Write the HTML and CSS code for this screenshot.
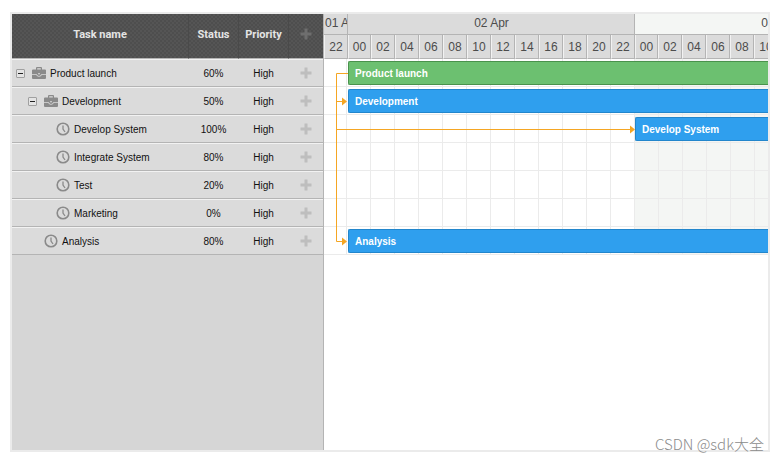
FILE: index.html
```html
<!DOCTYPE html>
<html lang="en">
<head>
    <meta charset="UTF-8">
    <meta name="viewport" content="width=device-width, initial-scale=1.0">
    <title>Gantt</title>
    <link rel="stylesheet" href="styles.css">
</head>
<body>
    <svg width="0" height="0" class="sprite">
        <symbol id="plus" viewBox="0 0 12 12">
            <path d="M4.5 0.5h3v4h4v3h-4v4h-3v-4h-4v-3h4z"/>
        </symbol>
        <symbol id="case" viewBox="0 0 14 12">
            <path fill-rule="evenodd" d="M4 2.5V1q0-1 1-1h4q1 0 1 1v1.5h3q1 0 1 1V7.200H9.200q-.5 1.800-2.200 1.800T4.800 7.200H0V3.500q0-1 1-1zM5.200 2.500h3.600V1.200H5.200zM0 8h4.200q.8 1.800 2.800 1.800T9.800 8H14v3q0 1-1 1H1q-1 0-1-1zM6 6.200h2v1H6z"/>
        </symbol>
        <symbol id="clock" viewBox="0 0 14 14">
            <circle cx="7" cy="7" r="5.800" fill="none" stroke="currentColor" stroke-width="1.600"/>
            <path d="M7 3.500V7l2 3" fill="none" stroke="currentColor" stroke-width="1.300"/>
        </symbol>
    </svg>

    <div class="gantt">
        <div class="grid">
            <table>
                <thead>
                    <tr>
                        <th>Task name</th>
                        <th class="col-status">Status</th>
                        <th class="col-priority">Priority</th>
                        <th class="col-add"><button type="button" class="add" aria-label="Add task"><svg><use href="#plus"/></svg></button></th>
                    </tr>
                </thead>
                <tbody>
                    <tr>
                        <td><div class="name"><button type="button" class="toggle" aria-label="Collapse"></button><svg class="icon case"><use href="#case"/></svg>Product launch</div></td>
                        <td>60%</td>
                        <td>High</td>
                        <td><button type="button" class="add" aria-label="Add task"><svg><use href="#plus"/></svg></button></td>
                    </tr>
                    <tr>
                        <td><div class="name level-1"><button type="button" class="toggle" aria-label="Collapse"></button><svg class="icon case"><use href="#case"/></svg>Development</div></td>
                        <td>50%</td>
                        <td>High</td>
                        <td><button type="button" class="add" aria-label="Add task"><svg><use href="#plus"/></svg></button></td>
                    </tr>
                    <tr>
                        <td><div class="name level-2 leaf"><svg class="icon"><use href="#clock"/></svg>Develop System</div></td>
                        <td>100%</td>
                        <td>High</td>
                        <td><button type="button" class="add" aria-label="Add task"><svg><use href="#plus"/></svg></button></td>
                    </tr>
                    <tr>
                        <td><div class="name level-2 leaf"><svg class="icon"><use href="#clock"/></svg>Integrate System</div></td>
                        <td>80%</td>
                        <td>High</td>
                        <td><button type="button" class="add" aria-label="Add task"><svg><use href="#plus"/></svg></button></td>
                    </tr>
                    <tr>
                        <td><div class="name level-2 leaf"><svg class="icon"><use href="#clock"/></svg>Test</div></td>
                        <td>20%</td>
                        <td>High</td>
                        <td><button type="button" class="add" aria-label="Add task"><svg><use href="#plus"/></svg></button></td>
                    </tr>
                    <tr>
                        <td><div class="name level-2 leaf"><svg class="icon"><use href="#clock"/></svg>Marketing</div></td>
                        <td>0%</td>
                        <td>High</td>
                        <td><button type="button" class="add" aria-label="Add task"><svg><use href="#plus"/></svg></button></td>
                    </tr>
                    <tr>
                        <td><div class="name level-1 leaf"><svg class="icon"><use href="#clock"/></svg>Analysis</div></td>
                        <td>80%</td>
                        <td>High</td>
                        <td><button type="button" class="add" aria-label="Add task"><svg><use href="#plus"/></svg></button></td>
                    </tr>
                </tbody>
            </table>
        </div>

        <div class="chart">
            <div class="scale">
                <div class="day partial">
                    <div class="date">01 A</div>
                    <div class="hours"><span>22</span></div>
                </div>
                <div class="day">
                    <div class="date">02 Apr</div>
                    <div class="hours"><span>00</span><span>02</span><span>04</span><span>06</span><span>08</span><span>10</span><span>12</span><span>14</span><span>16</span><span>18</span><span>20</span><span>22</span></div>
                </div>
                <div class="day weekend">
                    <div class="date">03 Apr</div>
                    <div class="hours"><span>00</span><span>02</span><span>04</span><span>06</span><span>08</span><span>10</span><span>12</span><span>14</span><span>16</span><span>18</span><span>20</span><span>22</span></div>
                </div>
            </div>
            <div class="rows">
                <div class="row"><div class="bar project">Product launch</div></div>
                <div class="row"><div class="bar">Development</div></div>
                <div class="row"><div class="bar next-day">Develop System</div></div>
                <div class="row"></div>
                <div class="row"></div>
                <div class="row"></div>
                <div class="row"><div class="bar">Analysis</div></div>
                <!-- dependency links -->
                <svg class="links" width="312" height="196">
                    <path class="line" d="M24 14.500H12.500V182.500H19M12.500 42.500H19M12.500 70.500H307"/>
                    <path class="arrow" d="M18 38.500l5 4-5 4zM18 178.500l5 4-5 4zM306 66.500l5 4-5 4z"/>
                </svg>
            </div>
        </div>
    </div>
    <div class="watermark">CSDN @sdk大全</div>
</body>
</html>
```

FILE: styles.css
```css
* {
    box-sizing: border-box;
}

body {
    position: relative;
    display: flex;
    min-height: 100vh;
    margin: 0;
    padding: 12px 9px 8px 10px;
    background: #fff;
    color: #111;
    font-family: "Liberation Sans", Arial, sans-serif;
    font-size: 10px;
}

.sprite {
    position: absolute;
}

.gantt {
    display: flex;
    flex: 1;
    min-width: 0;
    border: 2px solid #ebebeb;
}

/* task list */
.grid {
    flex: none;
    width: 312px;
    background: #d6d6d6;
    border-right: 1px solid #b4b4b4;
}

table {
    width: 100%;
    table-layout: fixed;
    border-collapse: separate;
    border-spacing: 0;
}

th {
    height: 45px;
    padding: 0 0 4px;
    background: repeating-conic-gradient(#4e4e4e 0 25%, #555 0 50%) 0 0 / 4px 4px;
    border-bottom: 1px solid #b4b4b4;
    border-right: 1px solid #4a4a4a;
    color: #e4e4e4;
    font-size: 11px;
    font-family: Roboto, "Liberation Sans", sans-serif;
}

th:last-child {
    border-right: 0;
}

.col-status,
.col-priority {
    width: 50px;
}

.col-add {
    width: 34px;
}

td {
    height: 28px;
    padding: 0 1px 0 0;
    background: #dbdbdb;
    border-top: 1px solid #f2f2f2;
    border-bottom: 1px solid #b4b4b4;
    text-align: center;
}

.name {
    display: flex;
    align-items: center;
    padding-left: 4px;
}

.level-1 {
    padding-left: 16px;
}

.level-2 {
    padding-left: 28px;
}

.leaf .icon {
    margin-left: 16px;
}

.toggle {
    position: relative;
    width: 9px;
    height: 9px;
    margin: 0 7px 0 0;
    padding: 0;
    background: #e4e4e4;
    border: 1px solid #a0a0a0;
    border-radius: 1px;
}

.toggle::before {
    content: "";
    position: absolute;
    top: 3px;
    left: 1px;
    width: 5px;
    height: 1px;
    background: #222;
}

.icon {
    width: 14px;
    height: 14px;
    margin-right: 4px;
    color: #8a8a8a;
    fill: #8a8a8a;
}

.case {
    height: 12px;
}

.add {
    display: block;
    width: 12px;
    height: 12px;
    margin: 0 auto;
    padding: 0;
    background: none;
    border: 0;
}

.add svg {
    display: block;
    width: 12px;
    height: 12px;
    fill: #bebebe;
}

th .add svg {
    fill: #6e6e6e;
}

/* timeline */
.chart {
    flex: 1;
    min-width: 0;
    overflow: hidden;
    background: #fff;
}

.scale {
    display: flex;
    color: #4c4c4c;
    font-size: 12px;
    text-align: center;
}

.day {
    flex: none;
    width: 287px;
}

.partial {
    width: 24px;
}

.date {
    height: 21px;
    padding-left: 1px;
    overflow: hidden;
    background: #dbdbdb;
    border-right: 1px solid #b4b4b4;
    border-bottom: 1px solid #b4b4b4;
    line-height: 18px;
    white-space: nowrap;
}

.weekend .date {
    background: #f4f6f4;
}

.hours {
    display: flex;
}

.hours span {
    width: 24px;
    height: 24px;
    background: #dbdbdb;
    border-left: 1px solid #f2f2f2;
    border-right: 1px solid #b4b4b4;
    border-bottom: 1px solid #b4b4b4;
    line-height: 25px;
}

.day:not(.partial) span:first-child {
    width: 23px;
}

.rows {
    position: relative;
}

.row {
    height: 28px;
    padding: 2px 0 0 24px;
    border-bottom: 1px solid #ebebeb;
    background:
        repeating-linear-gradient(90deg, transparent 0 22px, #ebebeb 22px 23px, transparent 23px 24px),
        linear-gradient(90deg, #fff 311px, #f4f6f4 311px);
}

.bar {
    height: 24px;
    padding-left: 6px;
    background: #2f9fee;
    border: 1px solid #2286cc;
    border-right: 0;
    border-radius: 2px 0 0 2px;
    color: #fff;
    font-weight: bold;
    line-height: 24px;
}

.project {
    background: #6cc070;
    border-color: #49924c;
}

.next-day {
    margin-left: 287px;
}

.links {
    position: absolute;
    top: 0;
    left: 0;
}

.line {
    fill: none;
    stroke: #f5a623;
}

.arrow {
    fill: #f5a623;
}

.watermark {
    position: absolute;
    right: 15px;
    bottom: 6px;
    color: #8c8c8c;
    font-family: "Noto Sans CJK SC", "Liberation Sans", sans-serif;
    font-size: 15px;
    font-weight: 300;
    line-height: 20px;
}
```
